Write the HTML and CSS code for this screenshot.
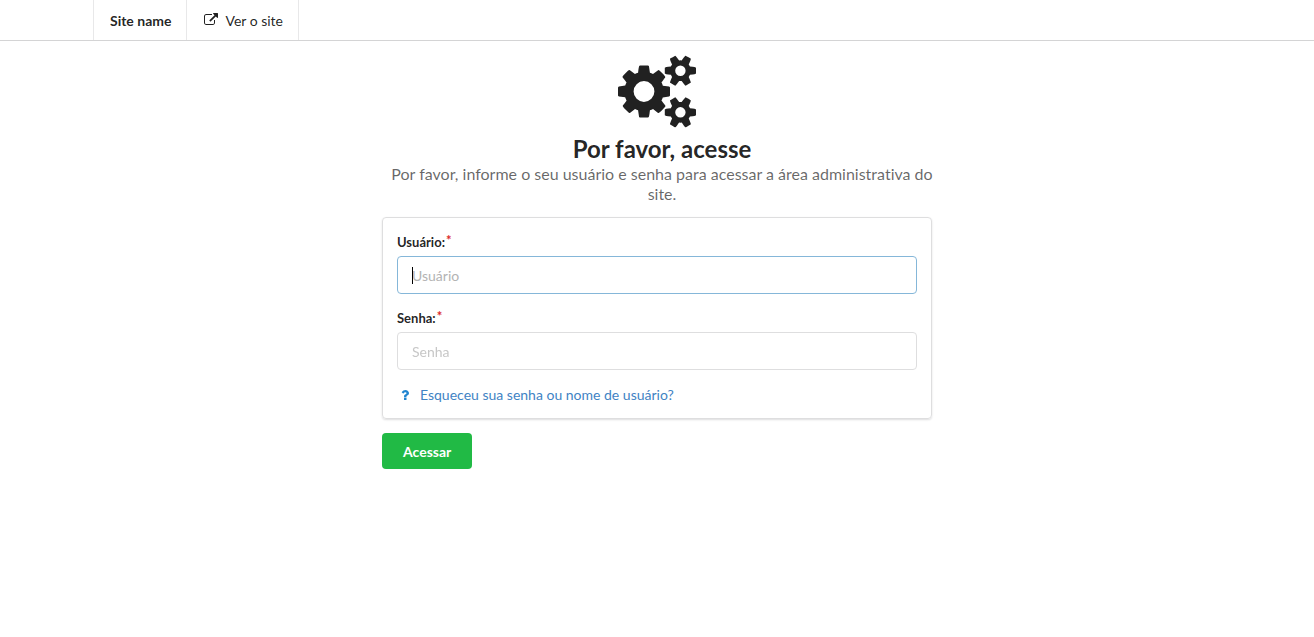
FILE: index.html
```html
<!DOCTYPE html>
<html lang="pt-BR">
<head>
<meta charset="utf-8">
<meta name="viewport" content="width=device-width, initial-scale=1">
<title>Por favor, acesse</title>
<link rel="stylesheet" href="styles.css">
</head>
<body>
<header class="topbar">
  <nav class="menu">
    <a class="menu-item menu-brand" href="#">Site name</a>
    <a class="menu-item" href="#">
      <svg class="icon menu-icon" viewBox="0 0 1792 1792" aria-hidden="true"><path d="M1408 928v320q0 119-84.500 203.500t-203.500 84.500h-832q-119 0-203.500-84.500t-84.500-203.500v-832q0-119 84.500-203.500t203.500-84.500h704q14 0 23 9t9 23v64q0 14-9 23t-23 9h-704q-66 0-113 47t-47 113v832q0 66 47 113t113 47h832q66 0 113-47t47-113v-320q0-14 9-23t23-9h64q14 0 23 9t9 23zm384-864v512q0 26-19 45t-45 19-45-19l-176-176-652 652q-10 10-23 10t-23-10l-114-114q-10-10-10-23t10-23l652-652-176-176q-19-19-19-45t19-45 45-19h512q26 0 45 19t19 45z"/></svg>
      Ver o site
    </a>
  </nav>
</header>
<main class="login">
  <svg class="cogs" viewBox="0 0 1920 1792" aria-hidden="true"><path d="M896 896q0-106-75-181t-181-75-181 75-75 181 75 181 181 75 181-75 75-181zm768 512q0-52-38-90t-90-38-90 38-38 90q0 53 37.500 90.500t90.500 37.500 90.500-37.500 37.500-90.500zm0-1024q0-52-38-90t-90-38-90 38-38 90q0 53 37.500 90.500t90.500 37.500 90.500-37.500 37.500-90.500zm-384 421v185q0 10-7 19.500t-16 10.500l-155 24q-11 35-32 76 34 48 90 115 7 11 7 20 0 12-7 19-23 30-82.500 89.500t-78.500 59.500q-11 0-21-7l-115-90q-37 19-77 31-11 108-23 155-7 24-30 24h-186q-11 0-20-7.500t-10-17.500l-23-153q-34-10-75-31l-118 89q-7 7-20 7-11 0-21-8-144-133-144-160 0-9 7-19 10-14 41-53t47-61q-23-44-35-82l-152-24q-10-1-17-9.500t-7-19.500v-185q0-10 7-19.500t16-10.500l155-24q11-35 32-76-34-48-90-115-7-11-7-20 0-12 7-20 22-30 82-89t79-59q11 0 21 7l115 90q34-18 77-32 11-108 23-154 7-24 30-24h186q11 0 20 7.500t10 17.500l23 153q34 10 75 31l118-89q8-7 20-7 11 0 21 8 144 133 144 160 0 8-7 19-12 16-42 54t-45 60q23 48 34 82l152 23q10 2 17 10.500t7 19.500zm640 533v140q0 16-149 31-12 27-30 52 51 113 51 138 0 4-4 7-122 71-124 71-8 0-46-47t-52-68q-20 2-30 2t-30-2q-14 21-52 68t-46 47q-2 0-124-71-4-3-4-7 0-25 51-138-18-25-30-52-149-15-149-31v-140q0-16 149-31 13-29 30-52-51-113-51-138 0-4 4-7 4-2 35-20t59-34 30-16q8 0 46 46.500t52 67.500q20-2 30-2t30 2q51-71 92-112l6-2q4 0 124 70 4 3 4 7 0 25-51 138 17 23 30 52 149 15 149 31zm0-1024v140q0 16-149 31-12 27-30 52 51 113 51 138 0 4-4 7-122 71-124 71-8 0-46-47t-52-68q-20 2-30 2t-30-2q-14 21-52 68t-46 47q-2 0-124-71-4-3-4-7 0-25 51-138-18-25-30-52-149-15-149-31v-140q0-16 149-31 13-29 30-52-51-113-51-138 0-4 4-7 4-2 35-20t59-34 30-16q8 0 46 46.500t52 67.500q20-2 30-2t30 2q51-71 92-112l6-2q4 0 124 70 4 3 4 7 0 25-51 138 17 23 30 52 149 15 149 31z"/></svg>
  <div class="heading">
    <h1 class="title">Por favor, acesse</h1>
    <p class="subtitle">Por favor, informe o seu usuário e senha para acessar a área administrativa do site.</p>
  </div>
  <form class="form">
    <div class="panel">
      <div class="field">
        <label class="label" for="username">Usuário:</label>
        <div class="control">
          <input class="input" id="username" type="text" placeholder="Usuário" required autofocus>
          <span class="caret" aria-hidden="true"></span>
        </div>
      </div>
      <div class="field">
        <label class="label" for="password">Senha:</label>
        <div class="control">
          <input class="input" id="password" type="password" placeholder="Senha" required>
        </div>
      </div>
      <a class="help" href="#">
        <svg class="icon help-icon" viewBox="0 0 1792 1792" aria-hidden="true"><path d="M1088 1256v240q0 16-12 28t-28 12h-240q-16 0-28-12t-12-28v-240q0-16 12-28t28-12h240q16 0 28 12t12 28zm316-600q0 54-15.500 101t-35 76.500-55 59.500-57.500 43.500-61 35.500q-41 23-68.500 65t-27.500 67q0 17-12 32.500t-28 15.500h-240q-15 0-25.500-18.500t-10.500-37.500v-45q0-83 65-156.500t143-108.500q59-27 84-56t25-76q0-42-46.500-74t-107.500-32q-65 0-108 29-35 25-107 115-13 16-31 16-12 0-25-8l-164-125q-13-10-15.500-25t5.500-28q160-266 464-266 80 0 161 31t146 83 106 127.500 41 158.500z"/></svg>
        Esqueceu sua senha ou nome de usuário?
      </a>
    </div>
    <button class="submit" type="submit">Acessar</button>
  </form>
</main>
</body>
</html>
```
FILE: styles.css
```css
* { box-sizing: border-box; }

body {
  margin: 0;
  background: #fff;
  color: rgba(0, 0, 0, .87);
  font: 14px/20px Lato, "Liberation Sans", sans-serif;
  font-variant-ligatures: none;
}

.icon {
  width: 14px;
  height: 14px;
  fill: currentColor;
}

.topbar {
  border-bottom: 1px solid #d4d4d5;
}

.menu {
  display: flex;
  max-width: 1128px;
  margin: 0 auto;
  border-left: 1px solid #e8e8e9;
}

.menu-item {
  display: flex;
  align-items: center;
  gap: 7px;
  padding: 11px 15px 9px 17px;
  border-right: 1px solid #e8e8e9;
  color: inherit;
  text-decoration: none;
}

.menu-brand {
  padding-left: 16px;
  font-weight: 700;
}

.menu-icon {
  margin-bottom: 2px;
}

.login {
  max-width: 550px;
  margin: 0 auto;
  padding-top: 14px;
}

.cogs {
  display: block;
  width: 78px;
  height: 73px;
  margin: 0 auto;
  fill: #212121;
}

.heading {
  margin: 0 -5px 0 5px;
  text-align: center;
}

.title {
  margin: 6px 0 0;
  font-size: 24px;
  line-height: 30px;
  font-weight: 700;
}

.subtitle {
  margin: 0;
  color: rgba(0, 0, 0, .6);
  font-size: 16px;
  line-height: 20px;
}

.form {
  margin-top: 13px;
}

.panel {
  padding: 14px;
  border: 1px solid #dededf;
  border-radius: 4px;
  box-shadow: 0 1px 2px rgba(34, 36, 38, .15);
}

.field {
  margin-bottom: 14px;
}

.label {
  display: block;
  margin-bottom: 4px;
  font-size: 13px;
  line-height: 20px;
  font-weight: 700;
}

.label::after {
  content: "*";
  margin-left: 1px;
  color: #db2828;
  vertical-align: top;
  line-height: 16px;
}

.control {
  position: relative;
}

.input {
  display: block;
  width: 100%;
  height: 38px;
  padding: 0 14px;
  border: 1px solid #dededf;
  border-radius: 4px;
  outline: 0;
  background: #fff;
  color: rgba(0, 0, 0, .87);
  font: inherit;
}

.input::placeholder { color: #c7c7c7; }

.input:focus {
  border-color: #85b7d9;
  caret-color: transparent;
}

.input:focus::placeholder { color: #b3b3b3; }

.caret {
  position: absolute;
  top: 11px;
  left: 15px;
  width: 1px;
  height: 17px;
  background: #000;
  pointer-events: none;
}

.help {
  display: flex;
  align-items: center;
  gap: 8px;
  padding-top: 1px;
  padding-left: 1px;
  margin-bottom: -1px;
  color: #4183c4;
  text-decoration: none;
}

.help-icon { fill: #2185d0; }

.submit {
  margin-top: 14px;
  padding: 9px 21px 7px;
  border: 0;
  border-radius: 4px;
  background: #21ba45;
  color: #fff;
  font: 700 14px/20px Lato, "Liberation Sans", sans-serif;
}
```
